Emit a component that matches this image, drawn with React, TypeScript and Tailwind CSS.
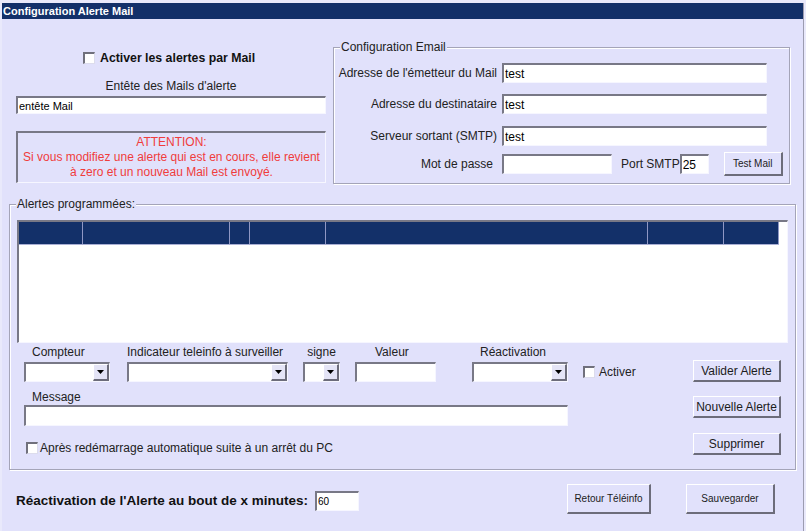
import React from 'react';

// ---------------------------------------------------------------------------
// Classic win32 look: sunken fields, raised buttons, etched group boxes
// ---------------------------------------------------------------------------

const BG = 'bg-[#e1e1fb]';
const SUNKEN =
  'border-t-2 border-l-2 border-b border-r border-t-[#787886] border-l-[#787886] border-b-[#f6f6ff] border-r-[#f6f6ff]';
const RAISED =
  'border-t border-l border-b-2 border-r-2 border-t-white border-l-white border-b-[#6c6c7a] border-r-[#6c6c7a]';
const GROUP = 'border border-[#a4a4b8] shadow-[inset_1px_1px_0_#ffffff,1px_1px_0_#ffffff]';

// header columns of the alert grid (px)
const COLUMNS = [64, 147, 20, 76, 322, 76, 55];

function TextField({ value = '', className = '' }: { value?: string; className?: string }) {
  return (
    <input
      readOnly
      value={value}
      className={`${SUNKEN} bg-white px-[1px] text-black outline-none ${className}`}
    />
  );
}

function Combo({ className = '' }: { className?: string }) {
  return (
    <div className={`${SUNKEN} flex justify-end bg-white ${className}`}>
      <div className={`${RAISED} flex h-full w-[16px] items-center justify-center bg-[#e4e4f6]`}>
        <svg width="7" height="4" viewBox="0 0 7 4" aria-hidden="true">
          <path d="M0 0h7L3.5 4z" fill="#000" />
        </svg>
      </div>
    </div>
  );
}

function Btn({ children, className = '' }: { children: React.ReactNode; className?: string }) {
  return (
    <button className={`${RAISED} ${BG} shrink-0 text-[#1c1c1c] ${className}`}>{children}</button>
  );
}

function Check() {
  return (
    <span className="inline-block h-[12px] w-[12px] shrink-0 border-t-2 border-l-2 border-b border-r border-t-[#70707c] border-l-[#70707c] border-b-[#dcdcec] border-r-[#dcdcec] bg-white" />
  );
}

export default function App() {
  return (
    <div className="h-[531px] w-[806px] overflow-hidden bg-[#e9e9fb] pl-[2px] pt-[3px] font-['Liberation_Sans',Arial,sans-serif] text-[12px] text-[#222]">
      <div className={`flex h-[528px] w-[802px] flex-col border-r border-[#9c9cb0] ${BG}`}>
        {/* Title bar */}
        <div className="h-[16px] bg-[#133069] pl-[1px] text-[11px] font-bold leading-[16px] text-white">
          Configuration Alerte Mail
        </div>

        {/* Top: mail options + SMTP configuration */}
        <div className="flex items-start">
          <div className="ml-[14px] flex w-[310px] flex-col">
            <div className="mt-[32px] flex h-[14px] items-center pl-[67px]">
              <Check />
              <span className="ml-[5px] text-[12.3px] font-bold leading-[14px] text-[#111]">
                Activer les alertes par Mail
              </span>
            </div>
            <div className="mt-[14px] text-center leading-[14px]">Entête des Mails d'alerte</div>
            <TextField value="entête Mail" className="mt-[3px] h-[18px] w-full text-[11px]" />
            <div
              className={`mt-[17px] flex h-[52px] flex-col items-center justify-center ${SUNKEN} leading-[15px] text-[#f03c3c]`}
            >
              <span>ATTENTION:</span>
              <span>Si vous modifiez une alerte qui est en cours, elle revient</span>
              <span>à zero et un nouveau Mail est envoyé.</span>
            </div>
          </div>

          <fieldset className={`ml-[7px] mt-[22px] h-[143px] w-[457px] ${GROUP}`}>
            <legend className={`ml-[6px] px-[1px] ${BG} leading-[12px]`}>Configuration Email</legend>
            <div className="mt-[10px] flex h-[20px] items-center">
              <span className="w-[163px] text-right">Adresse de l'émetteur du Mail</span>
              <TextField value="test" className="ml-[5px] h-[20px] w-[265px]" />
            </div>
            <div className="mt-[11px] flex h-[20px] items-center">
              <span className="w-[163px] text-right">Adresse du destinataire</span>
              <TextField value="test" className="ml-[5px] h-[20px] w-[265px]" />
            </div>
            <div className="mt-[12px] flex h-[20px] items-center">
              <span className="w-[163px] text-right">Serveur sortant (SMTP)</span>
              <TextField value="test" className="ml-[5px] h-[20px] w-[265px]" />
            </div>
            <div className="mt-[8px] flex h-[20px] items-center">
              <span className="w-[163px] pr-[4px] text-right">Mot de passe</span>
              <TextField className="ml-[5px] h-[20px] w-[110px]" />
              <span className="ml-[9px]">Port SMTP</span>
              <TextField value="25" className="h-[20px] w-[29px]" />
              <Btn className="ml-[15px] h-[24px] w-[59px] text-[10px]">Test Mail</Btn>
            </div>
          </fieldset>
        </div>

        {/* Scheduled alerts */}
        <fieldset className={`ml-[7px] mt-[14px] h-[272px] w-[787px] ${GROUP}`}>
          <legend className={`ml-[6px] px-[1px] ${BG} leading-[12px]`}>Alertes programmées:</legend>

          <div className={`ml-[7px] mt-[10px] h-[123px] w-[771px] ${SUNKEN} bg-white`}>
            <div className="flex h-[23px] w-[760px] border-b border-[#a9afd4] bg-[#133069]">
              {COLUMNS.map((w, i) => (
                <div key={i} className="h-full border-r border-[#8f97c4]" style={{ width: w }} />
              ))}
            </div>
          </div>

          <div className="flex">
            <div className="ml-[14px] w-[669px]">
              <div className="mt-[3px] flex items-end">
                <div className="flex w-[86px] flex-col">
                  <span className="pl-[8px] leading-[13px]">Compteur</span>
                  <Combo className="mt-[3px] h-[20px] w-full" />
                </div>
                <div className="ml-[17px] flex w-[161px] flex-col">
                  <span className="leading-[13px]">Indicateur teleinfo à surveiller</span>
                  <Combo className="mt-[3px] h-[20px] w-full" />
                </div>
                <div className="ml-[15px] flex w-[37px] flex-col">
                  <span className="text-center leading-[13px]">signe</span>
                  <Combo className="mt-[3px] h-[20px] w-full" />
                </div>
                <div className="ml-[15px] flex w-[81px] flex-col">
                  <span className="pl-[20px] leading-[13px]">Valeur</span>
                  <TextField className="mt-[3px] h-[20px] w-full" />
                </div>
                <div className="ml-[36px] flex w-[96px] flex-col">
                  <span className="pl-[8px] leading-[13px]">Réactivation</span>
                  <Combo className="mt-[3px] h-[20px] w-full" />
                </div>
                <div className="ml-[15px] flex h-[20px] items-center">
                  <Check />
                  <span className="ml-[4px]">Activer</span>
                </div>
              </div>

              <div className="mt-[9px] pl-[8px] leading-[13px]">Message</div>
              <TextField className="mt-[1px] h-[21px] w-[544px]" />

              <div className="ml-[2px] mt-[15px] flex h-[14px] items-center">
                <Check />
                <span className="ml-[2px]">Après redémarrage automatique suite à un arrêt du PC</span>
              </div>
            </div>

            <div className="flex flex-col">
              <Btn className="mt-[17px] h-[22px] w-[88px] text-[12px]">Valider Alerte</Btn>
              <Btn className="mt-[14px] h-[22px] w-[88px] text-[12px]">Nouvelle Alerte</Btn>
              <Btn className="mt-[15px] h-[22px] w-[88px] text-[12px]">Supprimer</Btn>
            </div>
          </div>
        </fieldset>

        {/* Footer */}
        <div className="mt-[14px] flex h-[30px] items-center">
          <span className="ml-[14px] mt-[4px] text-[13.5px] font-bold text-[#111]">
            Réactivation de l'Alerte au bout de x minutes:
          </span>
          <TextField value="60" className="ml-[7px] mt-[4px] h-[20px] w-[44px] text-[10px]" />
          <Btn className="ml-auto h-[30px] w-[84px] text-[10px]">Retour Téléinfo</Btn>
          <Btn className="ml-[35px] mr-[28px] h-[30px] w-[89px] text-[10px]">Sauvegarder</Btn>
        </div>
      </div>
    </div>
  );
}
